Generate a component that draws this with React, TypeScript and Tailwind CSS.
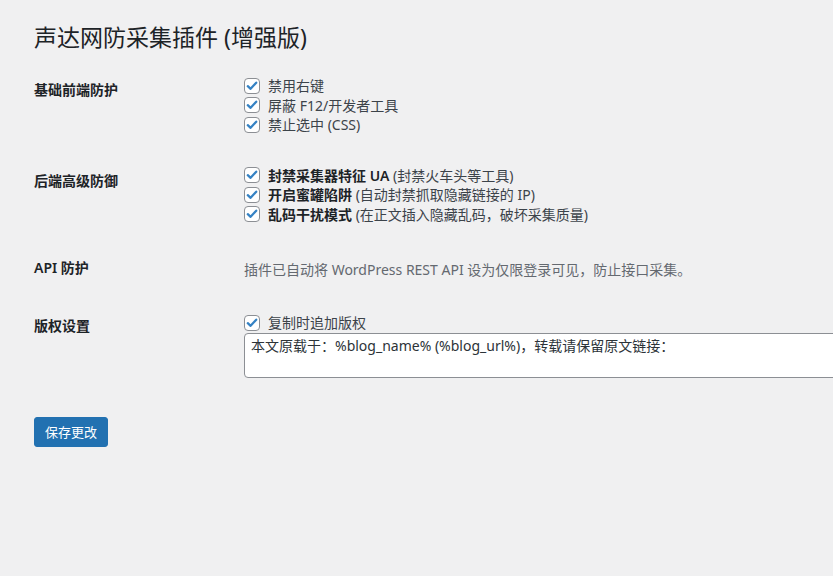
import React from "react";

const font = {
  fontFamily: '"Noto Sans", "Noto Sans CJK SC", sans-serif',
};

function Check({ children }: { children: React.ReactNode }) {
  return (
    <label className="flex h-[19.5px] items-center text-[14px] text-[#3c434a]">
      <span className="mr-2 flex h-4 w-4 shrink-0 items-center justify-center rounded-[4px] border border-[#8c8f94] bg-white">
        <svg viewBox="0 0 16 16" className="h-[14px] w-[14px]">
          <path
            d="M3.2 8.2 L6.4 11.2 L12.8 4.2"
            fill="none"
            stroke="#3582c4"
            strokeWidth="2.6"
            strokeLinecap="round"
            strokeLinejoin="round"
          />
        </svg>
      </span>
      <span className="whitespace-nowrap leading-[19px]">{children}</span>
    </label>
  );
}

function Row({
  label,
  children,
  tdClass = "pt-[15px] pb-[15px]",
  thClass = "pt-[20px] pb-[20px]",
}: {
  label: string;
  children: React.ReactNode;
  tdClass?: string;
  thClass?: string;
}) {
  return (
    <div className="grid grid-cols-[210px_1fr]">
      <div className={`${thClass} text-[14px] font-semibold leading-[18px] text-[#1d2327]`}>
        {label}
      </div>
      <div className={tdClass}>{children}</div>
    </div>
  );
}

export default function App() {
  return (
    <div className="min-h-screen w-full overflow-hidden bg-[#f0f0f1]" style={font}>
      <div className="pl-[34px] pt-[23px]">
        <h1 className="text-[23px] font-normal leading-[29px] text-[#1d2327]">
          声达网防采集插件 (增强版)
        </h1>

        <div className="mt-[9px]">
          <Row label="基础前端防护" tdClass="pt-[15px] pb-[16px]">
            <Check>禁用右键</Check>
            <Check>屏蔽 F12/开发者工具</Check>
            <Check>禁止选中 (CSS)</Check>
          </Row>

          <Row label="后端高级防御" thClass="pt-[21px] pb-[20px]" tdClass="pt-[15px] pb-[15px]">
            <Check>
              <b className="font-semibold text-[#1d2327]">封禁采集器特征 UA</b> (封禁火车头等工具)
            </Check>
            <Check>
              <b className="font-semibold text-[#1d2327]">开启蜜罐陷阱</b> (自动封禁抓取隐藏链接的 IP)
            </Check>
            <Check>
              <b className="font-semibold text-[#1d2327]">乱码干扰模式</b> (在正文插入隐藏乱码，破坏采集质量)
            </Check>
          </Row>

          <Row label="API 防护" tdClass="pt-[21px] pb-[15px]">
            <p className="whitespace-nowrap text-[14px] leading-[19px] text-[#646970]">
              插件已自动将 WordPress REST API 设为仅限登录可见，防止接口采集。
            </p>
          </Row>

          <Row label="版权设置" tdClass="pt-[16px] pb-[15px]">
            <Check>复制时追加版权</Check>
            <textarea
              className="block h-[45px] w-[650px] resize-none rounded-[4px] border border-[#8c8f94] bg-white px-[6px] py-[2px] text-[14px] leading-[20px] text-[#2c3338] outline-none"
              style={font}
              defaultValue="本文原载于：%blog_name% (%blog_url%)，转载请保留原文链接："
            />
          </Row>
        </div>

        <button className="mt-[24px] h-[30px] rounded-[3px] border border-[#2271b1] bg-[#2271b1] px-[10px] text-[13px] leading-[28px] text-white">
          保存更改
        </button>
      </div>
    </div>
  );
}
